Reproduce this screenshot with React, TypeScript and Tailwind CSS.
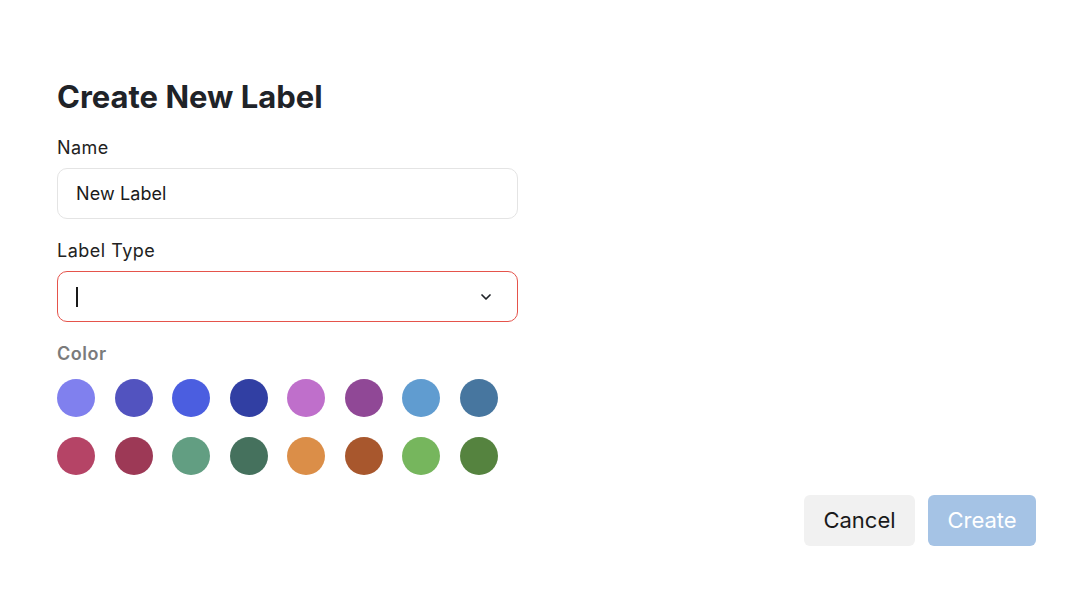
import React from "react";

const rows = [
  ["#8080ee", "#5253bf", "#4b5ee0", "#313fa3", "#bf6fcb", "#904896", "#609cd0", "#47769f"],
  ["#b54466", "#9d3956", "#629e82", "#45715d", "#db8e48", "#a8572d", "#76b65d", "#55833f"],
];

function ColorDot({ color }: { color: string }) {
  return (
    <button
      type="button"
      className="h-[38px] w-[38px] shrink-0 rounded-full"
      style={{ backgroundColor: color }}
      aria-label={color}
    />
  );
}

export default function App() {
  return (
    <div className="min-h-screen bg-white font-['Inter',sans-serif] text-[#1f2328]">
      <div className="pl-[57px] pr-[42px] pt-[79px]">
        <h1 className="text-[31px] font-bold leading-[36px]">
          Create New Label
        </h1>

        <div className="mt-[21px] w-[461px]">
          <label className="block text-[18px] leading-[24px] tracking-[0.4px] text-[#222]">
            Name
          </label>
          <div className="mt-2 flex h-[51px] items-center rounded-[10px] border border-[#e4e4e4] px-[18px] text-[18px] tracking-[0.1px] text-[#1a1a1a]">
            New Label
          </div>

          <label className="mt-5 block text-[18px] leading-[24px] tracking-[0.5px] text-[#222]">
            Label Type
          </label>
          <div className="mt-2 flex h-[51px] items-center justify-between rounded-[10px] border border-[#e5534b] pl-[18px] pr-[23px]">
            <span className="h-[20px] w-[2px] bg-[#1a1a1a]" />
            <svg
              width="16"
              height="16"
              viewBox="0 0 24 24"
              fill="none"
              stroke="#1f2328"
              strokeWidth="2.6"
              strokeLinecap="round"
              strokeLinejoin="round"
            >
              <path d="M6 9l6 6 6-6" />
            </svg>
          </div>

          <label className="mt-5 block text-[18px] font-semibold leading-[24px] tracking-[0.5px] text-[#7b7b7b]">
            Color
          </label>
          <div className="mt-[13px] flex flex-col gap-5">
            {rows.map((row, i) => (
              <div key={i} className="flex gap-[19.5px]">
                {row.map((c) => (
                  <ColorDot key={c} color={c} />
                ))}
              </div>
            ))}
          </div>
        </div>

        <div className="mt-5 flex justify-end gap-[13px]">
          <button
            type="button"
            className="h-[51px] w-[111px] rounded-[6px] bg-[#f1f1f1] text-[22px] text-[#1a1a1a]"
          >
            Cancel
          </button>
          <button
            type="button"
            className="h-[51px] w-[108px] rounded-[6px] bg-[#a5c3e5] text-[22px] text-white"
          >
            Create
          </button>
        </div>
      </div>
    </div>
  );
}
